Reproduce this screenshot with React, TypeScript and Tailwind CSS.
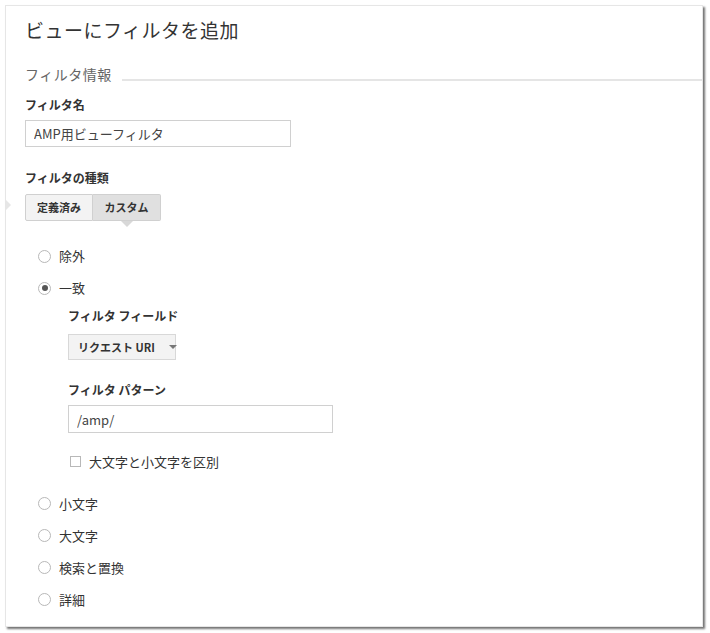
import { useState } from "react";

const font = { fontFamily: '"Noto Sans CJK JP", "Liberation Sans", sans-serif' };

function Radio({ label, checked, onClick }: { label: string; checked?: boolean; onClick: () => void }) {
  return (
    <div className="flex items-center h-[20px] cursor-pointer" onClick={onClick}>
      <span className="w-[13px] h-[13px] rounded-full border border-[#b8b8b8] bg-white flex items-center justify-center mr-[8px]">
        {checked && <span className="w-[6px] h-[6px] rounded-full bg-[#555]" />}
      </span>
      <span className="text-[13px] text-[#333]">{label}</span>
    </div>
  );
}

export default function App() {
  const [tipo, setTipo] = useState("custom");
  const [modo, setModo] = useState("一致");
  const [nome, setNome] = useState("AMP用ビューフィルタ");
  const [padrao, setPadrao] = useState("/amp/");

  const acima = ["除外", "一致"];
  const abaixo = ["小文字", "大文字", "検索と置換", "詳細"];

  return (
    <div className="w-[710px] h-[633px] bg-white p-[5px] pr-[7px] pb-[6px]" style={font}>
      <div className="relative h-full bg-white border border-[#e6e6e6] shadow-[2px_2px_2px_rgba(0,0,0,0.55)] pl-[19px] pt-[10px]">
        <h1 className="text-[19px] text-[#333] leading-[28px] tracking-[0.5px]">ビューにフィルタを追加</h1>

        <div className="flex items-end mt-[20px]">
          <span className="text-[14px] text-[#666] leading-[20px] tracking-[0.5px]">フィルタ情報</span>
          <div className="flex-1 ml-[10px] mb-[3px] h-[2px] bg-[#e5e5e5]" />
        </div>

        <div className="text-[12px] font-bold text-[#333] mt-[12px]">フィルタ名</div>
        <input
          className="mt-[6px] w-[266px] h-[27px] border border-[#d0d0d0] px-[8px] text-[13px] text-[#444] outline-none"
          value={nome}
          onChange={(e) => setNome(e.target.value)}
        />

        <div className="text-[12px] font-bold text-[#333] mt-[22px]">フィルタの種類</div>
        <span className="absolute left-[-1px] top-[193px] w-0 h-0 border-y-[6px] border-y-transparent border-l-[6px] border-l-[#e6e6e6]" />
        <div className="flex mt-[7px]">
          <button
            onClick={() => setTipo("pre")}
            className={`h-[27px] w-[68px] text-[11px] font-bold text-[#333] border border-[#d0d0d0] rounded-l-[2px] ${tipo === "pre" ? "bg-[#e0e0e0]" : "bg-[#f3f3f3]"}`}
          >
            定義済み
          </button>
          <button
            onClick={() => setTipo("custom")}
            className={`relative h-[27px] w-[68px] text-[11px] font-bold text-[#333] border border-l-0 border-[#d0d0d0] rounded-r-[2px] ${tipo === "custom" ? "bg-[#e0e0e0]" : "bg-[#f3f3f3]"}`}
          >
            カスタム
            {tipo === "custom" && (
              <span className="absolute left-1/2 -translate-x-1/2 top-[26px] w-0 h-0 border-x-[6px] border-x-transparent border-t-[6px] border-t-[#d8d8d8]" />
            )}
          </button>
        </div>

        <div className="ml-[13px] mt-[25px] flex flex-col gap-[12px]">
          {acima.map((m) => (
            <Radio key={m} label={m} checked={modo === m} onClick={() => setModo(m)} />
          ))}
        </div>

        <div className="ml-[43px] mt-[9px]">
          <div className="text-[12px] font-bold text-[#333]">フィルタ フィールド</div>
          <button className="mt-[9px] h-[26px] w-[108px] bg-[#f3f3f3] border border-[#d8d8d8] flex items-center pl-[9px] text-[11px] font-bold text-[#333] whitespace-nowrap">
            リクエスト URI
            <span className="ml-[14px] w-0 h-0 border-x-[4px] border-x-transparent border-t-[4px] border-t-[#777]" />
          </button>

          <div className="text-[12px] font-bold text-[#333] mt-[21px]">フィルタ パターン</div>
          <input
            className="mt-[6px] w-[265px] h-[28px] border border-[#d0d0d0] px-[8px] text-[13px] text-[#444] outline-none"
            value={padrao}
            onChange={(e) => setPadrao(e.target.value)}
          />

          <label className="flex items-center mt-[19px] ml-[2px] text-[13px] text-[#333]">
            <span className="w-[11px] h-[11px] border border-[#b8b8b8] mr-[8px]" />
            大文字と小文字を区別
          </label>
        </div>

        <div className="ml-[13px] mt-[22px] flex flex-col gap-[12px]">
          {abaixo.map((m) => (
            <Radio key={m} label={m} checked={modo === m} onClick={() => setModo(m)} />
          ))}
        </div>
      </div>
    </div>
  );
}
